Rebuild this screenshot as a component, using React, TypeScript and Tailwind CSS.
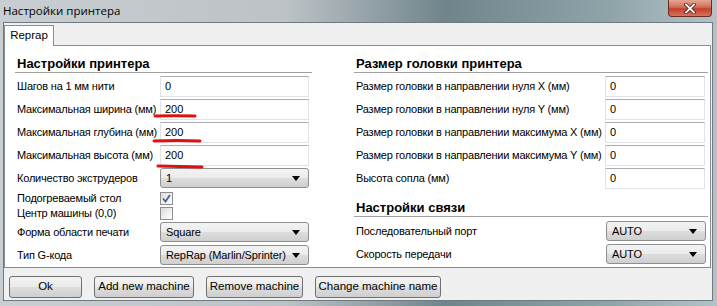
import React from 'react';

const font = "font-['Liberation_Sans','Arimo',sans-serif]";

function TextBox({ value, width }: { value: string; width: string }) {
  return (
    <div
      className={`${width} h-[21px] bg-white border border-[#dfe3e8] border-t-[#abadb3] flex items-center pl-[4px] text-[11px] text-black`}
    >
      {value}
    </div>
  );
}

function Combo({ value, width }: { value: string; width: string }) {
  return (
    <div
      className={`${width} h-[20px] rounded-[3px] border border-[#8e8f8f] bg-[linear-gradient(#f3f3f3_0%,#ebebeb_50%,#dddddd_51%,#cfcfcf_100%)] flex items-center justify-between pl-[5px] pr-[8px] text-[11px] tracking-[-0.1px] text-black`}
    >
      <span className="whitespace-nowrap">{value}</span>
      <svg width="8" height="5" viewBox="0 0 8 5">
        <path d="M0 0 H8 L4 5 Z" fill="#000" />
      </svg>
    </div>
  );
}

function CheckBox({ checked }: { checked: boolean }) {
  return (
    <div className="w-[13px] h-[13px] border border-[#8e8f8f] bg-[linear-gradient(135deg,#dcdcdc,#ffffff)] flex items-center justify-center">
      {checked && (
        <svg width="9" height="9" viewBox="0 0 9 9">
          <path d="M1 4.5 L3.5 7.5 L8 1" stroke="#4a5f97" strokeWidth="1.8" fill="none" />
        </svg>
      )}
    </div>
  );
}

function Header({ text }: { text: string }) {
  return (
    <div className="h-[18px] border-b border-[#a0a0a0] text-[13px] leading-[17px] font-bold text-black pl-[2px]">
      {text}
    </div>
  );
}

function Row({ label, children }: { label: string; children: React.ReactNode }) {
  return (
    <div className="flex items-center justify-between">
      <span className="text-[11px] tracking-[-0.2px] text-black pl-[2px] whitespace-nowrap">{label}</span>
      {children}
    </div>
  );
}

function Button({ label, width }: { label: string; width: string }) {
  return (
    <div
      className={`${width} h-[22px] rounded-[3px] border border-[#707070] bg-[linear-gradient(#f2f2f2_0%,#ebebeb_50%,#dddddd_51%,#cfcfcf_100%)] flex items-center justify-center text-[11.5px] text-black whitespace-nowrap`}
    >
      {label}
    </div>
  );
}

export default function App() {
  return (
    <div className={`relative w-[717px] h-[306px] overflow-hidden bg-[linear-gradient(90deg,#c9ced2_0%,#bcc2c6_40%,#70858b_62%,#8fa4a9_85%,#b2c3c8_100%)] ${font}`}>
      {/* title bar */}
      <div className="h-[22px] flex items-start justify-between">
        <span className="pl-[3px] pt-[3px] text-[11.5px] leading-[15px] text-black font-['Open_Sans','Noto_Sans',sans-serif]">
          Настройки принтера
        </span>
        <div className="mr-[5px] w-[44px] h-[17px] rounded-b-[4px] border border-t-0 border-[#6b2a22] bg-[linear-gradient(#e6a796_0%,#d26c55_45%,#c1402a_55%,#d9735a_100%)] flex items-center justify-center">
          <svg width="12" height="11" viewBox="0 0 12 11">
            <path d="M2 1.5 L10 9.5 M10 1.5 L2 9.5" stroke="#4a2018" strokeWidth="3.4" strokeLinecap="square" />
            <path d="M2 1.5 L10 9.5 M10 1.5 L2 9.5" stroke="#ffffff" strokeWidth="1.8" strokeLinecap="square" />
          </svg>
        </div>
      </div>

      {/* dialog body */}
      <div className="ml-[3px] mr-[4px] h-[279px] bg-[#f0f0f0] border border-[#6f7a80] flex flex-col">
        {/* tab strip */}
        <div className="h-[22px] flex items-end">
          <div className="w-[50px] h-[21px] bg-white border border-b-0 border-[#898c95] text-[11.5px] flex items-center justify-center -mb-[1px] relative z-10">
            Reprap
          </div>
        </div>
        {/* tab panel */}
        <div className="mr-[1px] h-[223px] bg-white border border-[#898c95] flex">
          {/* left column */}
          <div className="ml-[10px] w-[297px] pt-[9px] flex flex-col">
            <Header text="Настройки принтера" />
            <div className="mt-[3px] flex flex-col gap-[2px] pr-[3px]">
              <Row label="Шагов на 1 мм нити"><TextBox value="0" width="w-[149px]" /></Row>
              <Row label="Максимальная ширина (мм)"><TextBox value="200" width="w-[149px]" /></Row>
              <Row label="Максимальная глубина (мм)"><TextBox value="200" width="w-[149px]" /></Row>
              <Row label="Максимальная высота (мм)"><TextBox value="200" width="w-[149px]" /></Row>
              <Row label="Количество экструдеров"><Combo value="1" width="w-[149px]" /></Row>
            </div>
            <div className="mt-[3px] flex flex-col pr-[3px]">
              <div className="h-[15px] flex items-center">
                <span className="w-[145px] text-[11px] tracking-[-0.2px] pl-[2px]">Подогреваемый стол</span>
                <CheckBox checked />
              </div>
              <div className="h-[15px] flex items-center">
                <span className="w-[145px] text-[11px] tracking-[-0.2px] pl-[2px]">Центр машины (0,0)</span>
                <CheckBox checked={false} />
              </div>
            </div>
            <div className="mt-[1px] flex flex-col gap-[3px] pr-[3px]">
              <Row label="Форма области печати"><Combo value="Square" width="w-[149px]" /></Row>
              <Row label="Тип G-кода"><Combo value="RepRap (Marlin/Sprinter)" width="w-[149px]" /></Row>
            </div>
          </div>

          {/* right column */}
          <div className="ml-[42px] w-[354px] pt-[9px] flex flex-col">
            <Header text="Размер головки принтера" />
            <div className="mt-[3px] flex flex-col gap-[2px] pr-[3px]">
              <Row label="Размер головки в направлении нуля X (мм)"><TextBox value="0" width="w-[100px]" /></Row>
              <Row label="Размер головки в направлении нуля Y (мм)"><TextBox value="0" width="w-[100px]" /></Row>
              <Row label="Размер головки в направлении максимума X (мм)"><TextBox value="0" width="w-[100px]" /></Row>
              <Row label="Размер головки в направлении максимума Y (мм)"><TextBox value="0" width="w-[100px]" /></Row>
              <Row label="Высота сопла (мм)"><TextBox value="0" width="w-[100px]" /></Row>
            </div>
            <div className="mt-[10px]">
              <Header text="Настройки связи" />
            </div>
            <div className="mt-[4px] flex flex-col gap-[3px] pr-[2px]">
              <Row label="Последовательный порт"><Combo value="AUTO" width="w-[100px]" /></Row>
              <Row label="Скорость передачи"><Combo value="AUTO" width="w-[100px]" /></Row>
            </div>
          </div>
        </div>

        {/* buttons */}
        <div className="mt-[8px] ml-[5px] flex gap-[12px]">
          <Button label="Ok" width="w-[73px]" />
          <Button label="Add new machine" width="w-[100px]" />
          <Button label="Remove machine" width="w-[97px]" />
          <Button label="Change machine name" width="w-[126px]" />
        </div>
      </div>

      {/* red hand-drawn marks */}
      <svg className="absolute left-0 top-0 pointer-events-none" width="717" height="306">
        <path d="M155 116 Q175 115.5 195 116" stroke="#e01010" strokeWidth="3" strokeLinecap="round" fill="none" />
        <path d="M154 141 Q177 140 200 141" stroke="#e01010" strokeWidth="3" strokeLinecap="round" fill="none" />
        <path d="M158 166 Q180 166.5 202 167" stroke="#e01010" strokeWidth="3" strokeLinecap="round" fill="none" />
      </svg>
    </div>
  );
}
